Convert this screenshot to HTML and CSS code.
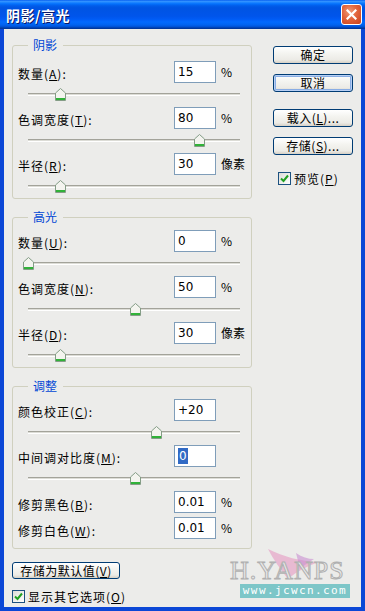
FILE: index.html
```html
<!DOCTYPE html>
<html lang="zh-CN">
<head>
  <meta charset="UTF-8">
  <title>阴影/高光</title>
  <link rel="stylesheet" href="styles.css">
</head>
<body>
  <div class="window">
    <div class="titlebar">
      <span class="title">阴影/高光</span>
      <span class="close-btn">
        <svg width="11" height="11" viewBox="0 0 11 11"><path d="M1.5 1.5 L9.5 9.5 M9.5 1.5 L1.5 9.5" stroke="#fff" stroke-width="2.2" stroke-linecap="square"/></svg>
      </span>
    </div>

    <div class="client">
      <div class="main">
        <div class="groups">
          <!-- Shadows -->
          <fieldset class="group shadows">
            <legend>阴影</legend>
            <div class="row"><label>数量(<u>A</u>):</label><span class="field">15</span><span class="unit">%</span></div>
            <div class="slider"><div class="track"></div><span class="thumb" style="left:32px"></span></div>
            <div class="row"><label>色调宽度(<u>T</u>):</label><span class="field">80</span><span class="unit">%</span></div>
            <div class="slider"><div class="track"></div><span class="thumb" style="left:171px"></span></div>
            <div class="row"><label>半径(<u>R</u>):</label><span class="field">30</span><span class="unit">像素</span></div>
            <div class="slider"><div class="track"></div><span class="thumb" style="left:32px"></span></div>
          </fieldset>

          <!-- Highlights -->
          <fieldset class="group">
            <legend>高光</legend>
            <div class="row"><label>数量(<u>U</u>):</label><span class="field">0</span><span class="unit">%</span></div>
            <div class="slider"><div class="track"></div><span class="thumb" style="left:0px"></span></div>
            <div class="row"><label>色调宽度(<u>N</u>):</label><span class="field">50</span><span class="unit">%</span></div>
            <div class="slider"><div class="track"></div><span class="thumb" style="left:107px"></span></div>
            <div class="row"><label>半径(<u>D</u>):</label><span class="field">30</span><span class="unit">像素</span></div>
            <div class="slider"><div class="track"></div><span class="thumb" style="left:32px"></span></div>
          </fieldset>

          <!-- Adjustments -->
          <fieldset class="group adjust">
            <legend>调整</legend>
            <div class="row"><label>颜色校正(<u>C</u>):</label><span class="field">+20</span><span class="unit"></span></div>
            <div class="slider"><div class="track"></div><span class="thumb" style="left:128px"></span></div>
            <div class="row"><label>中间调对比度(<u>M</u>):</label><span class="field"><span class="selected">0</span></span><span class="unit"></span></div>
            <div class="slider"><div class="track"></div><span class="thumb" style="left:107px"></span></div>
            <div class="row plain"><label>修剪黑色(<u>B</u>):</label><span class="field">0.01</span><span class="unit">%</span></div>
            <div class="row plain"><label>修剪白色(<u>W</u>):</label><span class="field">0.01</span><span class="unit">%</span></div>
          </fieldset>
        </div>

        <div class="actions">
          <button class="btn">确定</button>
          <button class="btn default">取消</button>
          <button class="btn spaced">载入(<u>L</u>)...</button>
          <button class="btn">存储(<u>S</u>)...</button>
          <div class="check"><span class="box"><svg width="9" height="9" viewBox="0 0 9 9"><path d="M1 4.5 L3.5 7 L8 1.5" fill="none" stroke="#21a121" stroke-width="2"/></svg></span><span class="check-label">预览(<u>P</u>)</span></div>
        </div>
      </div>

      <button class="btn save-default">存储为默认值(<u>V</u>)</button>
      <div class="check more"><span class="box"><svg width="9" height="9" viewBox="0 0 9 9"><path d="M1 4.5 L3.5 7 L8 1.5" fill="none" stroke="#21a121" stroke-width="2"/></svg></span><span class="check-label">显示其它选项(<u>O</u>)</span></div>
    </div>

    <!-- watermark -->
    <div class="watermark">
      <svg class="brush" width="80" height="52" viewBox="0 0 80 52">
        <path d="M12 2 C28 10 44 14 62 15 C50 20 40 25 32 32 C24 22 17 12 12 2 Z" fill="#e7a9c9" opacity="0.75"/>
        <path d="M40 6 C46 10 52 12 58 12 C52 16 48 18 44 22 Z" fill="#c98fd0" opacity="0.6"/>
        <path d="M14 38 C32 35 52 39 70 46 C50 51 30 50 14 38 Z" fill="#eab79a" opacity="0.8"/>
      </svg>
      <div class="wm-logo">H.YANPS</div>
      <div class="wm-url">www.jcwcn.com</div>
    </div>
  </div>
</body>
</html>
```

FILE: styles.css
```css
* {
  box-sizing: border-box;
}

body {
  margin: 0;
  font-family: "Noto Sans CJK SC", sans-serif;
  font-size: 12px;
  color: #000;
}

u {
  text-decoration: underline;
  text-underline-offset: 1px;
}

.window {
  position: relative;
  width: 365px;
  height: 611px;
  background: #0b47d6;
  display: flex;
  flex-direction: column;
}

/* Title bar */
.titlebar {
  height: 29px;
  display: flex;
  align-items: center;
  justify-content: space-between;
  padding: 0 3px 0 6px;
  background: linear-gradient(to bottom, #0058ee 0%, #3593ff 4%, #288eff 7%, #127dff 10%, #036ffc 14%, #0262ee 18%, #0057e5 24%, #0054e3 30%, #0055eb 56%, #005bf5 66%, #026afe 76%, #0062ef 86%, #0052d6 92%, #0040ab 96%, #003092 100%);
}

.title {
  color: #fff;
  font-weight: bold;
  font-size: 14px;
  letter-spacing: 0.5px;
  text-shadow: 1px 1px 0 #0a1a6a;
}

.close-btn {
  width: 21px;
  height: 21px;
  border: 1px solid #fff;
  border-radius: 3px;
  background: radial-gradient(circle at 40% 35%, #f09a78 0%, #e2643c 45%, #c8401c 100%);
  display: flex;
  align-items: center;
  justify-content: center;
}

/* Client area */
.client {
  flex: 1;
  margin: 0 4px 4px;
  background: #ececea;
  padding: 9px 0 0 8px;
}

.main {
  display: flex;
}

.groups {
  width: 240px;
}

.group {
  margin: 0;
  padding: 6px 0 0 5px;
  border: 1px solid #d0d0bf;
  border-radius: 3px;
  margin-top: 11px;
}

.group.shadows {
  margin-top: 0;
  padding-top: 9px;
}

.group.adjust {
  padding-bottom: 5px;
}

.group legend {
  margin-left: 10px;
  padding: 0 6px 0 5px;
  color: #0046d5;
  line-height: 14px;
}

.row {
  display: flex;
  align-items: center;
  height: 23px;
}

.row.plain {
  height: 26px;
}

.row label {
  flex: 1;
  white-space: nowrap;
  padding-top: 1px;
  letter-spacing: 1px;
}

.field {
  width: 42px;
  height: 22px;
  background: #fff;
  border: 1px solid #7f9db9;
  padding: 0 0 0 3px;
  font-family: "DejaVu Sans", sans-serif;
  font-size: 12px;
  display: flex;
  align-items: center;
  align-self: flex-start;
}

.selected {
  background: #316ac5;
  color: #fff;
  padding: 1px 1px;
}

.unit {
  width: 35px;
  padding-left: 5px;
  white-space: nowrap;
  align-self: flex-start;
  line-height: 22px;
}

.slider {
  position: relative;
  height: 23px;
  margin-left: 5px;
  width: 222px;
}

.group > .slider:last-child {
  height: 22px;
}

.track {
  position: absolute;
  left: 5px;
  right: 5px;
  top: 9px;
  height: 3px;
  background: #dcdcd6;
  border-top: 1px solid #a3a39a;
  border-bottom: 1px solid #fff;
}

.thumb {
  position: absolute;
  top: 4px;
  width: 11px;
  height: 13px;
  background: url("data:image/svg+xml,%3Csvg xmlns='http://www.w3.org/2000/svg' width='11' height='13'%3E%3Cpath d='M0.5 12.5 V5 L5.5 0.5 L10.5 5 V12.5 Z' fill='%23f4f4ef' stroke='%23849d86'/%3E%3Crect x='1' y='10' width='9' height='2' fill='%2331b239'/%3E%3C/svg%3E") no-repeat;
}

/* Right hand buttons */
.actions {
  margin-left: 21px;
  padding-top: 8px;
  display: flex;
  flex-direction: column;
  gap: 10px;
}

.btn {
  width: 80px;
  height: 18px;
  padding: 0;
  font-family: "Noto Sans CJK SC", sans-serif;
  font-size: 12px;
  line-height: 16px;
  letter-spacing: 0.5px;
  color: #000;
  border: 1px solid #003c74;
  border-radius: 3px;
  background: linear-gradient(to bottom, #ffffff 0%, #f4f4f0 40%, #ecebe6 80%, #d6d0c5 100%);
}

.btn.default {
  box-shadow: inset 0 0 0 1px #b8d0f5, inset 0 0 0 2px #89ade4;
}

.btn.spaced {
  margin-top: 7px;
}

.check {
  display: flex;
  align-items: center;
  gap: 3px;
  margin-top: 5px;
  padding-left: 5px;
}

.check-label {
  letter-spacing: 1px;
}

.box {
  width: 13px;
  height: 13px;
  border: 1px solid #1c5180;
  background: linear-gradient(135deg, #dcdcd7, #fff);
  display: flex;
  align-items: center;
  justify-content: center;
}

.save-default {
  display: block;
  width: 108px;
  height: 17px;
  margin-top: 13px;
}

.check.more {
  margin-top: 9px;
  padding-left: 0;
}

/* Watermark */
.watermark {
  position: absolute;
  left: 230px;
  top: 547px;
  width: 124px;
  height: 52px;
}

.brush {
  position: absolute;
  left: 26px;
  top: 0;
}

.wm-logo {
  position: absolute;
  left: 0;
  top: 9px;
  font-family: "Liberation Serif", serif;
  font-size: 26px;
  letter-spacing: 1px;
  color: #e8e8e8;
  -webkit-text-stroke: 1px #b0b0b0;
}

.wm-url {
  position: absolute;
  left: 10px;
  top: 37px;
  width: 110px;
  height: 14px;
  background: #7dc6c8;
  color: #fff;
  font-family: "DejaVu Sans Mono", monospace;
  font-size: 11px;
  line-height: 14px;
  letter-spacing: 1.4px;
  text-align: center;
}
```
